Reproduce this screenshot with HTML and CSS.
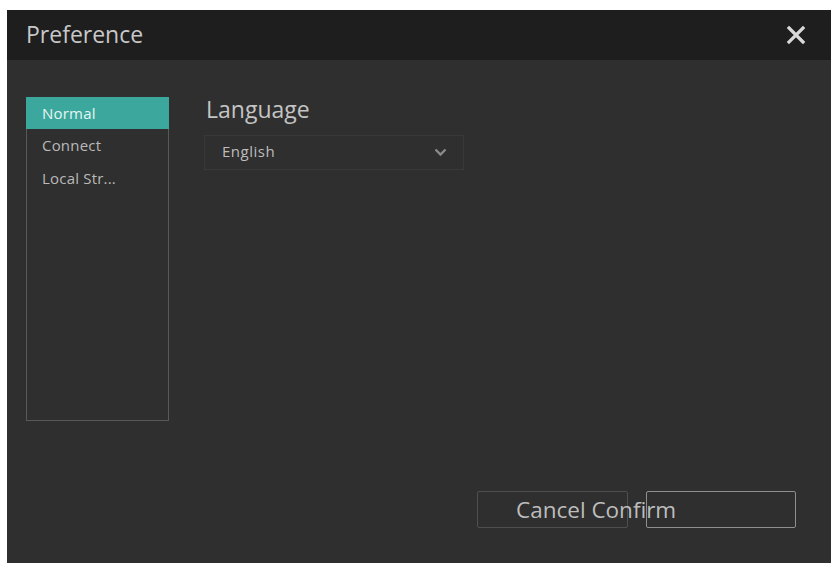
FILE: index.html
```html
<!DOCTYPE html>
<html lang="en">
<head>
<meta charset="utf-8">
<title>Preference</title>
<link rel="stylesheet" href="styles.css">
</head>
<body>
<div class="dialog">
  <header class="dialog-header">
    <span class="dialog-title">Preference</span>
    <button class="close-btn" aria-label="Close">
      <svg width="20" height="20" viewBox="0 0 20 20"><path d="M3 3 L17 17 M17 3 L3 17" stroke="#d9d9d9" stroke-width="3.2" stroke-linecap="square"/></svg>
    </button>
  </header>
  <div class="dialog-body">
    <ul class="nav-list">
      <li class="nav-item active">Normal</li>
      <li class="nav-item">Connect</li>
      <li class="nav-item">Local Str...</li>
    </ul>
    <div class="settings">
      <div class="field-label">Language</div>
      <div class="select">
        <span class="select-value">English</span>
        <svg width="13" height="9" viewBox="0 0 13 9"><path d="M1.5 1.5 L6.5 6.5 L11.5 1.5" stroke="#8a8a8a" stroke-width="2.4" fill="none"/></svg>
      </div>
    </div>
  </div>
  <footer class="dialog-footer">
    <button class="btn btn-cancel"><span class="btn-label">Cancel Confirm</span></button>
    <button class="btn btn-confirm"></button>
  </footer>
</div>
</body>
</html>
```
FILE: styles.css
```css
html, body {
  margin: 0;
  padding: 0;
  background: #ffffff;
}

body {
  font-family: "Open Sans", "Noto Sans", sans-serif;
  color: #c9c9c9;
}

.dialog {
  margin: 10px 0 0 7px;
  width: 824px;
  height: 553px;
  background: #2f2f2f;
  display: flex;
  flex-direction: column;
}

.dialog-header {
  height: 50px;
  background: #1e1e1e;
  display: flex;
  align-items: center;
  justify-content: space-between;
  padding: 0 25px 0 19px;
}

.dialog-title {
  font-size: 23px;
  color: #c8c8c8;
  margin-top: -3px;
}

.close-btn {
  background: none;
  border: 0;
  padding: 0;
  display: flex;
  margin-top: -1px;
}

.dialog-body {
  flex: 1;
  display: flex;
  padding: 37px 0 0 19px;
}

.nav-list {
  list-style: none;
  margin: 0;
  padding: 0;
  width: 141px;
  height: 322px;
  border: 1px solid #595959;
  box-sizing: content-box;
}

.nav-item {
  height: 33px;
  line-height: 33px;
  padding-left: 15px;
  font-size: 15px;
  letter-spacing: 0.2px;
  color: #b9b9b9;
}

.nav-item.active {
  background: #3ca89d;
  color: #e6f5f3;
  height: 32px;
  line-height: 32px;
  margin: -1px -1px 0 -1px;
  padding-left: 16px;
}

.settings {
  margin-left: 35px;
  margin-top: -3px;
}

.field-label {
  font-size: 23px;
  color: #c4c4c4;
  line-height: 31px;
  padding-left: 2px;
}

.select {
  margin-top: 10px;
  height: 35px;
  border: 1px solid #393939;
  display: flex;
  align-items: center;
  justify-content: space-between;
  padding: 0 16px 0 17px;
  box-sizing: border-box;
  width: 260px;
  font-size: 15px;
  letter-spacing: 0.5px;
  color: #bdbdbd;
}

.select-value {
  margin-top: -4px;
}

.dialog-footer {
  display: flex;
  justify-content: flex-end;
  gap: 18px;
  padding: 0 35px 35px 0;
}

.btn {
  width: 151px;
  height: 37px;
  background: #2f2f2f;
  border: 1px solid #4f4f4f;
  border-radius: 2px;
  padding: 0;
  font-family: inherit;
  position: relative;
}

.btn-confirm {
  width: 150px;
  border-color: #8f8f8f;
}

.btn-label {
  position: absolute;
  left: 38px;
  top: 50%;
  transform: translateY(-52%);
  white-space: nowrap;
  font-size: 22.5px;
  color: #bdbdbd;
  z-index: 1;
}
```
